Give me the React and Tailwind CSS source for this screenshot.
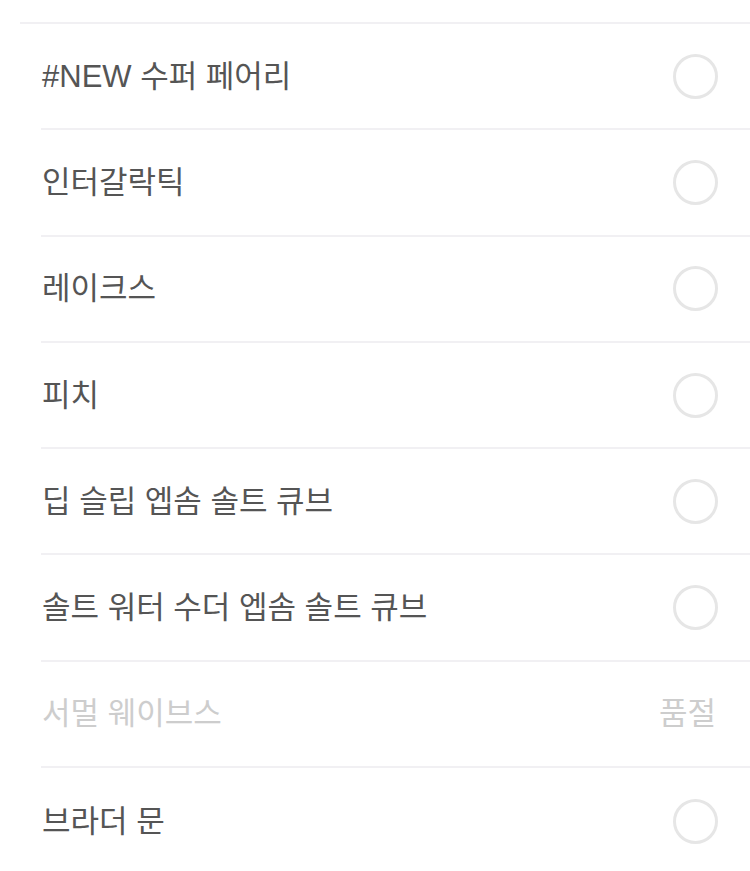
export default function App() {
  const items = [
    { name: '#NEW 수퍼 페어리' },
    { name: '인터갈락틱' },
    { name: '레이크스' },
    { name: '피치' },
    { name: '딥 슬립 엡솜 솔트 큐브' },
    { name: '솔트 워터 수더 엡솜 솔트 큐브' },
    { name: '서멀 웨이브스', soldOut: true },
    { name: '브라더 문' },
  ]

  return (
    <div className="min-h-[871px] bg-white font-['Liberation_Sans','Noto_Sans_CJK_KR',sans-serif]">
      <div className="pt-[22px] pl-[20px]">
        <div className="h-[2px] bg-[#f1f0f3]" />
      </div>
      <ul className="pl-[41px]">
        {items.map((item, i) => (
          <li
            key={item.name}
            className={`flex items-center justify-between h-[106.3px] pr-[32px] ${i < items.length - 1 ? 'border-b-2 border-[#f1f0f3]' : ''}`}
          >
            <span className={`text-[31px] leading-none pl-[1px] ${item.soldOut ? 'text-[#cdcdcd]' : 'text-[#555555]'}`}>
              {item.name}
            </span>
            {item.soldOut ? (
              <span className="text-[31px] leading-none text-[#cdcdcd] mr-[2px]">품절</span>
            ) : (
              <span className="w-[45px] h-[45px] rounded-full border-[3px] border-[#e6e6e6]" />
            )}
          </li>
        ))}
      </ul>
    </div>
  )
}
